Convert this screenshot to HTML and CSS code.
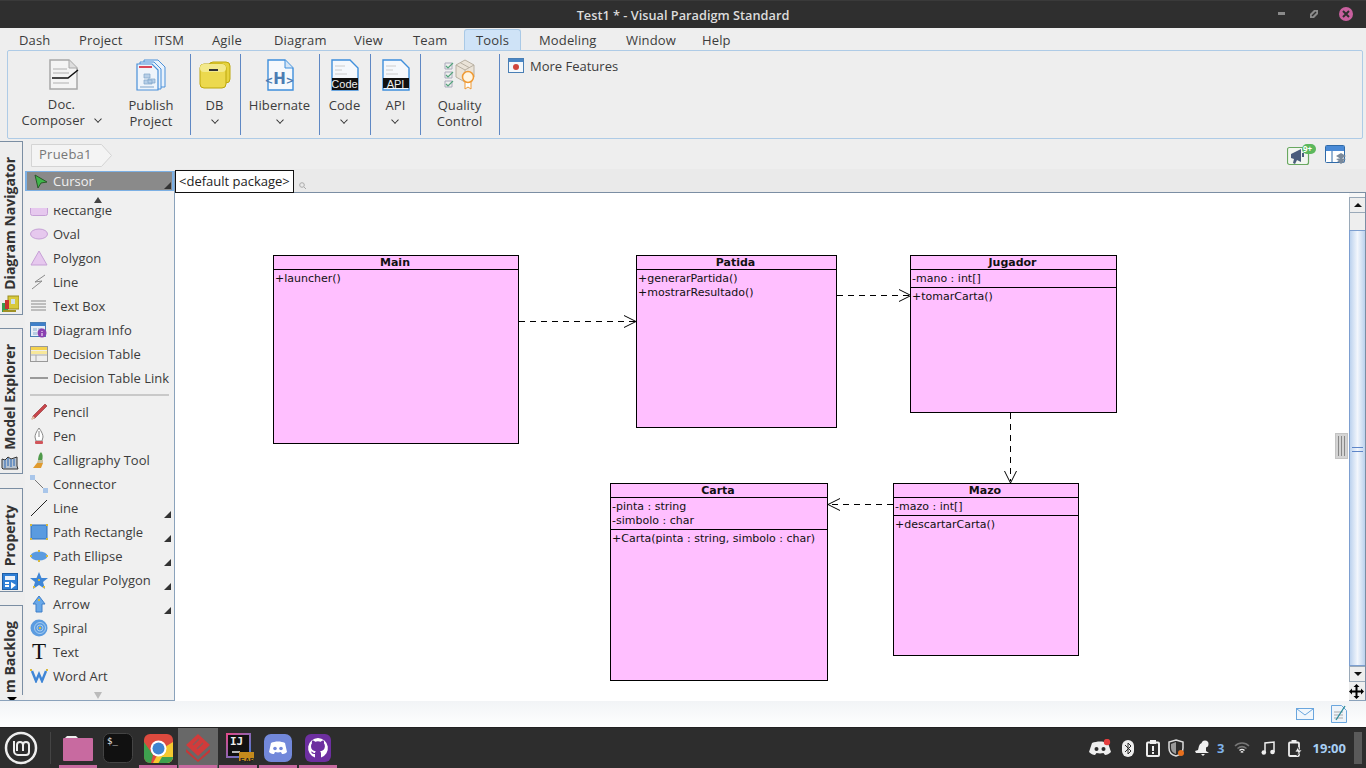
FILE: index.html
```html
<!DOCTYPE html>
<html lang="en">
<head>
<meta charset="utf-8">
<title>Test1 * - Visual Paradigm Standard</title>
<link rel="stylesheet" href="styles.css">
</head>
<body>
<div class="app">
  <header class="titlebar">
    <span class="title">Test1 * - Visual Paradigm Standard</span>
    <div class="winbtns">
      <svg width="7" height="4" viewBox="0 0 7 4"><rect x="0" y="0" width="7" height="3" fill="#8a8a8a"/></svg>
      <svg width="8" height="8" viewBox="0 0 8 8"><path d="M0 4 4 0h4v4L4 8H0z" fill="#8a8a8a"/><path d="M2 6 6 2" stroke="#2f2f2f" stroke-width="1.500"/></svg>
      <svg width="14" height="14" viewBox="0 0 14 14"><circle cx="7" cy="7" r="7" fill="#c9609f"/><path d="M4 4l6 6M10 4l-6 6" stroke="#2f2f2f" stroke-width="2"/></svg>
    </div>
  </header>

  <nav class="tabs">
    <span>Dash</span><span>Project</span><span>ITSM</span><span>Agile</span><span>Diagram</span><span>View</span><span>Team</span><span class="tab-on">Tools</span><span>Modeling</span><span>Window</span><span>Help</span>
  </nav>

  <section class="ribbon">
    <div class="rgroup g1">
      <div class="rbtn b-doc">
        <svg width="30" height="32" viewBox="0 0 30 32"><path d="M1 1h19l8 8v21H1z" fill="#f4f4f4" stroke="#a8a8a8" stroke-width="1.500"/><path d="M20 1v8h8" fill="#ddd" stroke="#a8a8a8"/><path d="M4 10h14M4 14h16M4 24h16" stroke="#b0b0b0"/><path d="M3 19h16l10-8" fill="none" stroke="#111" stroke-width="1.500"/></svg>
        <span class="rlabel">Doc.<br>Composer <i class="chev chev-gap"></i></span>
      </div>
      <div class="rbtn b-pub">
        <svg width="30" height="32" viewBox="0 0 30 32"><path d="M8 1h14l7 7v20H8z" fill="#e8f1fb" stroke="#4a90d9"/><path d="M4 3h14l7 7v20H4z" fill="#e8f1fb" stroke="#4a90d9"/><path d="M1 5h15l6 6v20H1z" fill="#eef4fb" stroke="#4a90d9" stroke-width="1.200"/><path d="M3 8h13" stroke="#d9475a" stroke-width="2"/><path d="M8 15h6v4H8zM12 20h7v4h-7zM8 21h8v4H8z" fill="#b7cfe8" stroke="#7fa3c9" stroke-width=".7"/><path d="M4 28h14" stroke="#7fa3c9"/></svg>
        <span class="rlabel">Publish<br>Project</span>
      </div>
    </div>
    <div class="rgroup g2">
      <div class="rbtn b-db">
        <svg width="32" height="28" viewBox="0 0 32 28"><rect x="10" y="1" width="21" height="21" rx="4" fill="#e6d33e" stroke="#bda70c"/><rect x="1" y="3" width="26" height="24" rx="4" fill="#ecd94e" stroke="#bda70c"/><rect x="1" y="3" width="26" height="8" rx="4" fill="#f3e98b"/><path d="M10 9h9" stroke="#333" stroke-width="2"/></svg>
        <span class="rlabel">DB<br><i class="chev"></i></span>
      </div>
    </div>
    <div class="rgroup g3">
      <div class="rbtn b-hib">
        <svg width="30" height="32" viewBox="0 0 30 32"><path d="M3 1h17l8 8v22H3z" fill="#f5f8fc" stroke="#3f8fdc" stroke-width="1.400"/><path d="M20 1v8h8" fill="#d5e5f5" stroke="#3f8fdc"/></svg>
        <span class="badge-h"><small>&lt;</small>H<small>&gt;</small></span>
        <span class="rlabel">Hibernate<br><i class="chev"></i></span>
      </div>
    </div>
    <div class="rgroup g4">
      <div class="rbtn b-code">
        <svg width="28" height="32" viewBox="0 0 28 32"><path d="M1 1h18l8 8v22H1z" fill="#f5f8fc" stroke="#3f8fdc" stroke-width="1.400"/><path d="M4 7h10M4 11h7M4 15h12" stroke="#ccc"/><rect x="1" y="19" width="26" height="12" fill="#111"/></svg>
        <span class="badge-code">Code</span>
        <span class="rlabel">Code<br><i class="chev"></i></span>
      </div>
    </div>
    <div class="rgroup g5">
      <div class="rbtn b-api">
        <svg width="28" height="32" viewBox="0 0 28 32"><path d="M1 1h18l8 8v22H1z" fill="#f5f8fc" stroke="#3f8fdc" stroke-width="1.400"/><path d="M4 7h10M4 11h7M4 15h12" stroke="#ccc"/><rect x="1" y="19" width="26" height="10" fill="#111"/></svg>
        <span class="badge-code">API</span>
        <span class="rlabel">API<br><i class="chev"></i></span>
      </div>
    </div>
    <div class="rgroup g6">
      <div class="rbtn b-qc">
        <svg width="32" height="32" viewBox="0 0 32 32"><path d="M12 6l9-5 9 5v12l-9 5-9-5z" fill="#eae3d8" stroke="#b8b0a2"/><path d="M12 6l9 5 9-5M21 11v12M16 3.500l9 5" fill="none" stroke="#b8b0a2"/><path d="M1 4h7v6H1zM1 13h7v6H1zM1 22h7v6H1z" fill="#eee" stroke="#aab"/><path d="M2 7l2 2 5-5M2 16l2 2 5-5M2 25l2 2 5-5" fill="none" stroke="#54a37c" stroke-width="1.200"/><path d="M21 22v8l3-2 3 2v-8" fill="#fff" stroke="#ef9a34"/><circle cx="24" cy="18" r="5.500" fill="#fff5e2" stroke="#ef9a34" stroke-width="1.500"/></svg>
        <span class="rlabel">Quality<br>Control</span>
      </div>
    </div>
    <div class="more">
      <svg width="16" height="15" viewBox="0 0 16 15"><rect x=".5" y=".5" width="15" height="14" fill="#f4f8fc" stroke="#4a7fb5"/><rect x="1" y="1" width="14" height="3" fill="#4a86c5"/><circle cx="8" cy="9" r="3" fill="#d0453c"/></svg>
      <span>More Features</span>
    </div>
  </section>

  <div class="crumbbar">
    <div class="crumb">
      <svg class="crumb-bg" width="82" height="23" viewBox="0 0 82 23"><path d="M.5.5h70l10 11-10 11H.5z" fill="#f4f4f4" stroke="#d4d4d4"/></svg>
      <span>Prueba1</span>
    </div>
    <div class="crumb-tools">
      <div class="megaphone">
        <svg width="30" height="22" viewBox="0 0 30 22"><rect x=".5" y="3.500" width="21" height="17" rx="2" fill="#f2f6f0" stroke="#69a860" stroke-width="1.200"/><path d="M4 10l10-5v13l-4-2-2 4-2-1 1-4-3-1z" fill="#4a5d7c"/><path d="M15 9h2v4h-2z" fill="#4a5d7c"/><rect x="15" y="0" width="14" height="10" rx="5" fill="#5cb85c"/></svg>
        <span class="nine">9+</span>
      </div>
      <svg width="21" height="19" viewBox="0 0 21 19"><rect x=".5" y=".5" width="19" height="17" rx="1" fill="#fff" stroke="#2f6aa8"/><rect x="1" y="1" width="18" height="5" fill="#4a8ad6"/><path d="M7 6v12" stroke="#2f6aa8"/><path d="M11 11l5-3 5 3-5 3zM11 14l5-1 5 1-5 3zM12 16l4-1 4 1-4 3z" fill="#7a8a9c"/></svg>
    </div>
  </div>

  <main class="work">
    <aside class="rail">
      <div class="vtab vt-nav"><span>Diagram Navigator</span>
        <svg width="18" height="18" viewBox="0 0 18 18"><rect x="7" y="1" width="11" height="13" fill="#d8c93c" stroke="#9a8d1e"/><rect x="10" y="4" width="4" height="5" fill="#cfe0ef"/><rect x="1" y="8" width="6" height="9" fill="#3a9c4e"/><rect x="4" y="5" width="4" height="9" fill="#c8342e"/><path d="M2 15h13v2H2z" fill="#a09124"/></svg>
      </div>
      <div class="vtab vt-model"><span>Model Explorer</span>
        <svg width="18" height="16" viewBox="0 0 18 16"><path d="M1 12V3l3 1 3-3 3 2 6-2v9l1 3H2z" fill="#b9c4d0" stroke="#333"/><path d="M4 4v8M7 2v8M10 3v8M13 3v7" stroke="#3f74b8" stroke-width="1.200"/></svg>
      </div>
      <div class="vtab vt-prop"><span>Property</span>
        <svg width="16" height="17" viewBox="0 0 16 17"><rect x=".5" y=".5" width="15" height="16" fill="#2f7fd6" stroke="#1d5fa8"/><rect x="3" y="3" width="10" height="4" fill="#eaf2fb"/><path d="M3 10h4M3 13h4" stroke="#fff" stroke-width="2"/><path d="M9 9l5 3-5 4z" fill="#fff"/></svg>
      </div>
      <div class="vtab vt-backlog"><span>m Backlog</span></div>
      <i class="rail-more"></i>
    </aside>

    <aside class="palette">
      <div class="cursor">
        <svg width="14" height="15" viewBox="0 0 14 15"><path d="M1 1l12 7-6 1-3 5z" fill="#3fb54a" stroke="#2a5a2a"/></svg>
        <span>Cursor</span><i class="corner"></i>
      </div>
      <div class="pal-up"><i></i></div>
      <div class="pal-list">
        <div class="item first"><svg width="18" height="12" viewBox="0 0 18 12"><rect x=".5" y=".5" width="17" height="11" rx="2" fill="#e6c8ee" stroke="#c6a0d6"/></svg><span>Rectangle</span></div>
        <div class="item"><svg width="18" height="12" viewBox="0 0 18 12"><ellipse cx="9" cy="6" rx="8.500" ry="5" fill="#e6c8ee" stroke="#c6a0d6"/></svg><span>Oval</span></div>
        <div class="item"><svg width="18" height="16" viewBox="0 0 18 16"><path d="M9 1l8 14H1z" fill="#e6c8ee" stroke="#c6a0d6"/></svg><span>Polygon</span></div>
        <div class="item"><svg width="18" height="16" viewBox="0 0 18 16"><path d="M15 1 5 8l7-1L2 15" fill="none" stroke="#8a8a8a"/></svg><span>Line</span></div>
        <div class="item"><svg width="18" height="12" viewBox="0 0 18 12"><path d="M1 1h15M1 4h15M1 7h15M1 10h15" stroke="#8a8a8a"/></svg><span>Text Box</span></div>
        <div class="item"><svg width="18" height="16" viewBox="0 0 18 16"><rect x=".5" y=".5" width="15" height="14" fill="#e8eef6" stroke="#4a7fb5"/><rect x="1" y="1" width="14" height="3" fill="#3f7fc9"/><path d="M3 6h4v3H3zM8 6h4v3H8zM3 10h4v3H3z" fill="#b8cde2"/><circle cx="12" cy="11" r="4.500" fill="#8a3fb0"/><path d="M12 9v1M12 11v3" stroke="#fff"/></svg><span>Diagram Info</span></div>
        <div class="item"><svg width="18" height="16" viewBox="0 0 18 16"><rect x=".5" y=".5" width="17" height="15" fill="#eee" stroke="#999"/><rect x="1" y="1" width="16" height="3" fill="#f4d24e"/><rect x="1" y="5" width="16" height="3" fill="#f8e89a"/><path d="M1 9h16M6 9v6" stroke="#aaa"/></svg><span>Decision Table</span></div>
        <div class="item"><svg width="18" height="12" viewBox="0 0 18 12"><path d="M0 6h18" stroke="#444"/></svg><span>Decision Table Link</span></div>
        <div class="pal-sep"></div>
        <div class="item"><svg width="18" height="18" viewBox="0 0 18 18"><path d="M15 1l2 2L5 15l-3 1 1-3z" fill="#c9444a" stroke="#8a2d30" stroke-width=".6"/><path d="M1 17l2-4 2 2z" fill="#e8c8a8"/></svg><span>Pencil</span></div>
        <div class="item"><svg width="18" height="18" viewBox="0 0 18 18"><path d="M9 1c3 4 4 7 4 9l-1 4H6l-1-4c0-2 1-5 4-9z" fill="#fff" stroke="#888"/><path d="M9 4v6" stroke="#888"/><rect x="5" y="14" width="8" height="3" rx="1" fill="#d0555a"/></svg><span>Pen</span></div>
        <div class="item"><svg width="18" height="18" viewBox="0 0 18 18"><path d="M11 1c2 2 2 5 1 9H8c0-4 1-7 3-9z" fill="#4f9a4a"/><path d="M8 9h5l0 3H7z" fill="#c8bfa0"/><path d="M7 12h6l-2 5H3z" fill="#e09a2e"/></svg><span>Calligraphy Tool</span></div>
        <div class="item"><svg width="18" height="18" viewBox="0 0 18 18"><path d="M3 3l12 12" stroke="#777"/><rect x="0" y="0" width="5" height="5" fill="#a9c6ea"/><rect x="13" y="13" width="5" height="5" fill="#a9c6ea"/></svg><span>Connector</span></div>
        <div class="item arrowed"><svg width="18" height="18" viewBox="0 0 18 18"><path d="M1 17 17 1" stroke="#222"/></svg><span>Line</span></div>
        <div class="item arrowed"><svg width="18" height="16" viewBox="0 0 18 16"><rect x="1" y="1" width="16" height="14" fill="#5a9be0" stroke="#2f6fb8"/><rect x="0" y="0" width="2" height="2" fill="#d8b93c"/><rect x="16" y="0" width="2" height="2" fill="#d8b93c"/><rect x="0" y="14" width="2" height="2" fill="#d8b93c"/><rect x="16" y="14" width="2" height="2" fill="#d8b93c"/></svg><span>Path Rectangle</span></div>
        <div class="item arrowed"><svg width="18" height="12" viewBox="0 0 18 12"><ellipse cx="9" cy="6" rx="8.500" ry="4.500" fill="#5a9be0"/><rect x="8" y="0" width="2" height="2" fill="#d8b93c"/><rect x="8" y="10" width="2" height="2" fill="#d8b93c"/><rect x="0" y="5" width="2" height="2" fill="#d8b93c"/><rect x="16" y="5" width="2" height="2" fill="#d8b93c"/></svg><span>Path Ellipse</span></div>
        <div class="item arrowed"><svg width="18" height="17" viewBox="0 0 18 17"><path d="M9 0l2.500 6H18l-5 4 2 7-6-4-6 4 2-7-5-4h6.500z" fill="#3f86d6"/><rect x="8" y="7" width="2" height="2" fill="#d8b93c"/><rect x="3" y="14" width="2" height="2" fill="#d8b93c"/><rect x="13" y="14" width="2" height="2" fill="#d8b93c"/></svg><span>Regular Polygon</span></div>
        <div class="item arrowed"><svg width="18" height="18" viewBox="0 0 18 18"><path d="M9 1l6 8h-3v8H6V9H3z" fill="#68a8e8" stroke="#3f7fc9"/><rect x="8" y="4" width="2" height="2" fill="#d8b93c"/></svg><span>Arrow</span></div>
        <div class="item"><svg width="18" height="18" viewBox="0 0 18 18"><circle cx="9" cy="9" r="8.500" fill="#5a9be0"/><circle cx="10" cy="9" r="5.500" fill="none" stroke="#a8cdf0"/><circle cx="10" cy="9" r="3" fill="none" stroke="#a8cdf0"/><rect x="9" y="8" width="2" height="2" fill="#d8b93c"/></svg><span>Spiral</span></div>
        <div class="item"><span class="t-icon">T</span><span>Text</span></div>
        <div class="item"><svg width="18" height="14" viewBox="0 0 18 14"><path d="M2 2l4 10 3-7 3 7 4-10" fill="none" stroke="#3f86d6" stroke-width="2.400"/><rect x="0" y="0" width="2" height="2" fill="#d8b93c"/><rect x="16" y="0" width="2" height="2" fill="#d8b93c"/></svg><span>Word Art</span></div>
      </div>
      <div class="pal-down"><i></i></div>
    </aside>

    <div class="editor">
      <div class="pkgbar">
        <span class="pkg">&lt;default package&gt;</span>
        <svg width="8" height="8" viewBox="0 0 8 8"><circle cx="3" cy="3" r="2.300" fill="none" stroke="#aaa"/><path d="M5 5l2 2" stroke="#aaa"/></svg>
      </div>
      <div class="canvas-row">
        <div class="canvas">
          <svg class="links" width="1175" height="508" viewBox="0 0 1175 508">
            <g fill="none" stroke="#000">
              <path d="M345 128.500h116" stroke-dasharray="6 5"/>
              <path d="M450 122.500l12 6-12 6"/>
              <path d="M663 102.500h73" stroke-dasharray="6 5"/>
              <path d="M725 96.500l12 6-12 6"/>
              <path d="M836.500 220v68" stroke-dasharray="6 5"/>
              <path d="M830.500 278l6 12 6-12"/>
              <path d="M719 311.500h-63" stroke-dasharray="6 5"/>
              <path d="M666 305.500l-12 6 12 6"/>
            </g>
          </svg>
          <article class="cls c-main">
            <h3>Main</h3>
            <div class="ops"><p>+launcher()</p></div>
          </article>
          <article class="cls c-patida">
            <h3>Patida</h3>
            <div class="ops"><p>+generarPartida()</p><p>+mostrarResultado()</p></div>
          </article>
          <article class="cls c-jugador">
            <h3>Jugador</h3>
            <div class="attrs"><p>-mano : int[]</p></div>
            <div class="ops"><p>+tomarCarta()</p></div>
          </article>
          <article class="cls c-carta">
            <h3>Carta</h3>
            <div class="attrs"><p>-pinta : string</p><p>-simbolo : char</p></div>
            <div class="ops"><p>+Carta(pinta : string, simbolo : char)</p></div>
          </article>
          <article class="cls c-mazo">
            <h3>Mazo</h3>
            <div class="attrs"><p>-mazo : int[]</p></div>
            <div class="ops"><p>+descartarCarta()</p></div>
          </article>
          <div class="grip"><i></i><i></i><i></i></div>
        </div>
        <div class="vscroll">
          <div class="sb-top"></div>
          <div class="sb-btn"><i class="up"></i></div>
          <div class="sb-gap"></div>
          <div class="sb-thumb"><b></b></div>
          <div class="sb-btn"><i class="down"></i></div>
          <div class="sb-move"><svg width="15" height="15" viewBox="0 0 15 15"><path d="M7.500 0l3 3H8.500v3.500H12V4.500l3 3-3 3V8.500H8.500V12h2l-3 3-3-3h2V8.500H3v2l-3-3 3-3v2h3.500V3h-2z" fill="#000"/></svg></div>
        </div>
      </div>
    </div>
  </main>

  <footer class="statusbar">
    <svg width="18" height="12" viewBox="0 0 18 12"><rect x=".5" y=".5" width="17" height="11" fill="#f2f7fc" stroke="#6aa6de"/><path d="M1 1l8 6 8-6" fill="none" stroke="#6aa6de"/></svg>
    <svg width="16" height="18" viewBox="0 0 16 18"><path d="M.5.500h10l5 5v12H.5z" fill="#eef4fa" stroke="#6aa6de"/><path d="M3 7h9M3 10h9M3 13h9" stroke="#aaa"/><path d="M5 15 14 1" stroke="#2a8a9a" stroke-width="1.300"/></svg>
  </footer>

  <div class="taskbar">
    <div class="launch">
      <svg class="mint" width="34" height="34" viewBox="0 0 34 34"><circle cx="17" cy="17" r="15" fill="none" stroke="#eee" stroke-width="2.500"/><path d="M10 10v10a4 4 0 0 0 4 4h8a3 3 0 0 0 3-3v-7a3 3 0 0 0-6 0v6M19 14a3 3 0 0 0-6 0v6" fill="none" stroke="#eee" stroke-width="2"/></svg>
      <i class="tb-sep"></i>
      <div class="app-ico on-line">
        <svg width="30" height="26" viewBox="0 0 30 26"><path d="M1 4l3-3h9l3 3z" fill="#eee"/><rect x="0" y="3" width="30" height="23" rx="1" fill="#c86aa0"/></svg>
      </div>
      <div class="app-ico">
        <svg width="30" height="30" viewBox="0 0 30 30"><rect x=".5" y=".5" width="29" height="29" rx="6" fill="#111" stroke="#444"/></svg>
        <span class="prompt">$_</span>
      </div>
      <div class="app-ico on-line">
        <svg width="29" height="29" viewBox="0 0 29 29"><rect width="29" height="29" rx="6" fill="#dd4a3e"/><path d="M0 23V8l9 13-2 8H6a6 6 0 0 1-6-6z" fill="#3ea14e"/><path d="M29 8v15a6 6 0 0 1-6 6H9l7-13z" fill="#f5c92f"/><path d="M14.500 29h8.500a6 6 0 0 0 6-6V23H18z" fill="#3ea14e"/><circle cx="14.500" cy="14.500" r="8" fill="#fff"/><circle cx="14.500" cy="14.500" r="6" fill="#3f84cf"/></svg>
      </div>
      <div class="app-ico on-line active">
        <svg width="28" height="28" viewBox="0 0 28 28"><path d="M14 0 26 11 14 22 2 11z" fill="#d23b3b"/><path d="M9 11l6-6M13 15l6-6" stroke="#8a5a5a" stroke-width="1.500"/><path d="M2 15l12 11 12-11v3L14 28 2 18z" fill="#c73636"/></svg>
      </div>
      <div class="app-ico on-line ide">
        <svg width="30" height="30" viewBox="0 0 30 30"><defs><linearGradient id="ijg" x1="0" y1="0" x2="1" y2="1"><stop offset="0" stop-color="#e04a8a"/><stop offset="1" stop-color="#3f7fd6"/></linearGradient></defs><rect x="1" y="1" width="23" height="23" fill="#111" stroke="url(#ijg)" stroke-width="2"/><path d="M6 19h8" fill="none" stroke="#eee" stroke-width="1.500"/><rect x="13" y="19" width="15" height="9" fill="#c48a1c"/></svg>
        <span class="ij">IJ</span>
        <span class="eap">EAP</span>
      </div>
      <div class="app-ico on-line">
        <svg width="28" height="28" viewBox="0 0 28 28"><rect width="28" height="28" rx="7" fill="#7288da"/><path d="M7 9c4-2 10-2 14 0l2 9c-2 2-4 2-5 2l-1-2c-2 .5-4 .5-6 0l-1 2c-1 0-3 0-5-2z" fill="#fff"/><circle cx="11" cy="14.500" r="1.800" fill="#7288da"/><circle cx="17" cy="14.500" r="1.800" fill="#7288da"/></svg>
      </div>
      <div class="app-ico on-line">
        <svg width="26" height="28" viewBox="0 0 26 28"><rect width="26" height="28" rx="6" fill="#6d2fa0"/><path d="M13 4a10 10 0 0 0-3 19.500v-3.500c-3 .6-3.500-1.500-4-2.500 2 0 2 2 4 1.500 0-1 .5-1.500.8-1.800-3-.5-4.800-2-4.800-5 0-1.200.4-2.200 1-3-.2-.6-.2-1.800.2-2.700 1.200 0 2.200.6 3 1.200a9 9 0 0 1 5.500 0c.8-.6 1.800-1.200 3-1.200.4.900.4 2.100.2 2.700.6.800 1 1.800 1 3 0 3-1.800 4.500-4.800 5 .5.500.9 1.200.9 2.500v3.800A10 10 0 0 0 13 4z" fill="#fff"/></svg>
      </div>
    </div>
    <div class="tray">
      <div class="t-discord">
        <svg width="24" height="18" viewBox="0 0 24 18"><path d="M4 4c5-2 11-2 16 0l3 9c-2 2-4 3-6 3l-1.500-2c-2.300.6-4.700.6-7 0L7 16c-2 0-4-1-6-3z" fill="#eee"/><circle cx="8.500" cy="10" r="2" fill="#2d2d2d"/><circle cx="15.500" cy="10" r="2" fill="#2d2d2d"/><circle cx="19" cy="3" r="3.200" fill="#e33d3d"/></svg>
      </div>
      <svg class="t-bt" width="12" height="17" viewBox="0 0 12 17"><rect width="12" height="17" rx="6" fill="#eee"/><path d="M3 5l6 6-3 3V3l3 3-6 6" fill="none" stroke="#2d2d2d"/></svg>
      <svg class="t-clip" width="14" height="17" viewBox="0 0 14 17"><rect x="1" y="2.500" width="12" height="13.500" rx="1" fill="none" stroke="#eee" stroke-width="2"/><rect x="4" y="0" width="6" height="4" fill="#eee"/><path d="M7 6v5M7 12v2" stroke="#eee" stroke-width="2"/></svg>
      <svg class="t-shield" width="17" height="18" viewBox="0 0 17 18"><path d="M8 1l7 2v6c0 4-3 7-7 8-4-1-7-4-7-8V3z" fill="none" stroke="#ddd" stroke-width="1.500"/><path d="M8 3v12c-3-1-5-3-5-6V5z" fill="#999"/><circle cx="13" cy="14" r="3" fill="#e8701e"/></svg>
      <svg class="t-bell" width="15" height="16" viewBox="0 0 15 16"><path d="M7 3a4 4 0 0 1 4 4v4l3 2H1l-1-2 3-1 1-4a4 4 0 0 1 3-3z" fill="#eee"/><path d="M6 14h4l-2 2z" fill="#eee"/><circle cx="10" cy="4" r="3.500" fill="#eee"/></svg>
      <span class="t-num">3</span>
      <svg class="t-wifi" width="16" height="12" viewBox="0 0 16 12"><path d="M1 4c4-4 10-4 14 0M3.500 6.500c3-2.500 6-2.500 9 0" fill="none" stroke="#777" stroke-width="1.500"/><path d="M5.500 8.500c1.500-1.500 3.500-1.500 5 0M7 10.500c.5-1 1.500-1 2 0" fill="none" stroke="#eee" stroke-width="1.500"/></svg>
      <svg class="t-music" width="14" height="14" viewBox="0 0 14 14"><path d="M4 11V2l9-1v10" fill="none" stroke="#eee" stroke-width="1.500"/><circle cx="2.800" cy="11.500" r="2.300" fill="#eee"/><circle cx="11.500" cy="11" r="2.300" fill="#eee"/></svg>
      <svg class="t-bat" width="14" height="17" viewBox="0 0 14 17"><rect x="1" y="2.500" width="10" height="13.500" rx="1" fill="none" stroke="#eee" stroke-width="1.800"/><rect x="3.500" y="0" width="5" height="3" fill="#eee"/><path d="M10 7 7 12h3l-1 4 5-6h-3z" fill="#eee" stroke="#2d2d2d" stroke-width=".7"/></svg>
      <span class="t-clock">19:00</span>
      <i class="t-show"></i>
    </div>
  </div>
</div>
</body>
</html>
```
FILE: styles.css
```css
* { box-sizing: border-box; }
html, body { margin: 0; padding: 0; }
body { width: 1366px; height: 768px; overflow: hidden; font-family: "Open Sans", "Noto Sans", sans-serif; font-size: 13px; color: #3c3c3c; background: #eeeeee; }
p, h3 { margin: 0; }
i { display: block; }

.app { display: flex; flex-direction: column; width: 1366px; height: 768px; }

/* title bar */
.titlebar { position: relative; flex: 0 0 28px; background: #2f2f2f; border-top: 1px solid #3a3a3a; display: flex; align-items: center; justify-content: center; }
.title { color: #dcdcdc; font-size: 12.750px; font-weight: 600; }
.winbtns { position: absolute; right: 13px; top: 6px; height: 14px; display: flex; align-items: center; }
.winbtns svg:nth-child(1) { margin-right: 25px; }
.winbtns svg:nth-child(2) { margin-right: 21px; }

/* tabs */
.tabs { flex: 0 0 22px; display: flex; align-items: flex-end; padding-left: 19px; background: #eeeeee; }
.tabs span { line-height: 20px; height: 20px; font-size: 13px; letter-spacing: .15px; }
.tabs span:nth-child(1) { flex: 0 0 60px; }
.tabs span:nth-child(2) { flex: 0 0 75px; }
.tabs span:nth-child(3) { flex: 0 0 58px; }
.tabs span:nth-child(4) { flex: 0 0 62px; }
.tabs span:nth-child(5) { flex: 0 0 80px; }
.tabs span:nth-child(6) { flex: 0 0 59px; }
.tabs span:nth-child(7) { flex: 0 0 51px; }
.tabs span:nth-child(9) { flex: 0 0 87px; }
.tabs span:nth-child(10) { flex: 0 0 76px; }
.tabs .tab-on { flex: 0 0 57px; height: 21px; margin-right: 18px; padding-left: 11px; background: #cfe3f7; border: 1px solid #a9c9e6; border-bottom: 0; border-radius: 3px 3px 0 0; }

/* ribbon */
.ribbon { flex: 0 0 89px; margin: 0 3px 0 7px; border: 1px solid #aecbe6; border-radius: 2px; display: flex; padding-top: 3px; background: #eeeeee; }
.rgroup { height: 81px; border-right: 1px solid #5f88c4; display: flex; }
.g1 { width: 183px; padding-left: 6px; }
.g2 { width: 50px; }
.g3 { width: 79px; }
.g4 { width: 51px; }
.g5 { width: 50px; }
.g6 { width: 79px; }
.rbtn { position: relative; flex: 0 0 auto; display: flex; flex-direction: column; align-items: center; padding-top: 5px; text-align: center; }
.rbtn svg { flex: 0 0 auto; }
.rlabel { display: block; line-height: 16px; font-size: 13px; margin-top: 6px; white-space: nowrap; letter-spacing: .1px; }
.b-doc { width: 95px; }
.b-doc svg { margin-left: 5px; }
.b-doc .rlabel { margin-top: 5px; }
.b-pub { width: 80px; margin-left: 2px; }
.b-db { width: 47px; padding-top: 7px; }
.b-db .rlabel { margin-top: 8px; }
.b-hib { width: 77px; }
.b-code, .b-api { width: 49px; }
.b-qc { width: 77px; }
.chev { display: inline-block; width: 6px; height: 6px; margin: 0 0 3px 0; border-right: 1.500px solid #333; border-bottom: 1.500px solid #333; transform: rotate(45deg) scale(.9); }
.chev-gap { margin-left: 7px; }
.badge-code { position: absolute; top: 25px; left: 0; right: 0; color: #eee; font-family: "Liberation Sans", sans-serif; font-size: 11px; line-height: 11px; }
.badge-h { position: absolute; top: 17px; left: 0; right: 0; color: #4a7cb3; font-family: "DejaVu Sans", sans-serif; font-size: 15px; font-weight: 700; line-height: 16px; }
.badge-h small { font-size: 10px; }
.more { display: flex; align-items: flex-start; gap: 6px; padding: 4px 0 0 8px; line-height: 16px; }

/* breadcrumb */
.crumbbar { flex: 0 0 32px; display: flex; align-items: flex-start; justify-content: space-between; padding: 5px 20px 0 31px; }
.crumb { position: relative; width: 82px; height: 23px; padding-left: 8px; line-height: 21px; color: #777; letter-spacing: .25px; }
.crumb-bg { position: absolute; left: 0; top: 0; }
.crumb span { position: relative; }
.crumb-tools { display: flex; gap: 8px; align-items: flex-start; padding-top: 1px; }
.megaphone { position: relative; width: 30px; height: 22px; margin-top: -1px; }
.nine { position: absolute; left: 16px; top: -1px; font-size: 8px; line-height: 11px; color: #fff; font-weight: 700; }

/* work area */
.work { flex: 1 1 auto; min-height: 0; display: flex; }
.rail { position: relative; flex: 0 0 25px; overflow: hidden; margin-top: -30px; }
.vtab { position: absolute; left: 0; width: 23px; background: #eeeeee; border: 1px solid #7b8ea3; border-left: 0; display: flex; flex-direction: column; align-items: center; justify-content: flex-end; gap: 5px; padding: 0 3px 1px 0; }
.vtab span { writing-mode: vertical-rl; transform: rotate(180deg); font-weight: 700; font-size: 14px; line-height: 20px; color: #333; white-space: nowrap; }
.vt-nav { top: 0; height: 174px; }
.vt-model { top: 187px; height: 146px; gap: 6px; }
.vt-prop { top: 347px; height: 104px; gap: 7px; }
.vt-backlog { top: 464px; height: 90px; border-bottom: 0; padding-bottom: 2px; }
.rail-more { position: absolute; left: 7px; top: 556px; width: 0; height: 0; border: 5px solid transparent; border-top: 5px solid #000; border-bottom: 0; }

.palette { flex: 0 0 150px; display: flex; flex-direction: column; height: 530px; border-right: 1px solid #8aa2bb; background: #f0f0f0; }
.cursor { position: relative; flex: 0 0 20px; display: flex; align-items: center; gap: 5px; padding-left: 7px; background: #8a8a8a; border: 1px solid #7cb0e4; color: #f0f0f0; border-width: 1px 2px; }
.corner, .item.arrowed::after { position: absolute; right: 1px; bottom: 1px; width: 0; height: 0; border-left: 7px solid transparent; border-bottom: 7px solid #333; }
.pal-up { flex: 0 0 17px; padding: 6px 0 0 69px; }
.pal-up i { width: 0; height: 0; border: 4px solid transparent; border-bottom: 6px solid #444; border-top: 0; }
.pal-list { flex: 0 0 480px; overflow: hidden; }
.item { position: relative; height: 24px; display: flex; align-items: center; padding-left: 5px; white-space: nowrap; }
.item svg { flex: 0 0 18px; }
.item span:last-child { position: absolute; left: 28px; }
.item.arrowed::after { content: ""; right: 3px; bottom: 2px; }
.first { margin-top: -10px; }
.pal-sep { height: 2px; margin: 4px 5px; background: #c9c9c9; }
.t-icon { font-family: "Liberation Serif", serif; font-size: 23px; font-weight: 400; color: #111; width: 18px; text-align: center; line-height: 24px; }
.pal-down { position: relative; height: 6px; }
.pal-down i { position: absolute; left: 69px; top: 4px; width: 0; height: 0; border: 4px solid transparent; border-top: 7px solid #bbb; border-bottom: 0; }

.editor { flex: 1 1 auto; display: flex; flex-direction: column; min-width: 0; margin-top: -2px; }
.pkgbar { flex: 0 0 24px; display: flex; align-items: flex-end; background: #eaeaea; padding-left: 0; border-bottom: 1px solid #7b8ea3; }
.pkg { height: 23px; width: 119px; border: 1px solid #111; background: #fff; padding-left: 3px; line-height: 20px; font-size: 13px; color: #222; white-space: nowrap; margin-bottom: -1px; }
.pkgbar svg { margin: 0 0 2px 5px; }
.canvas-row { flex: 0 0 508px; display: flex; }
.canvas { position: relative; flex: 0 0 1174px; background: #fff; overflow: hidden; }
.links { position: absolute; left: -1px; top: 0; }

/* UML classes */
.cls { position: absolute; display: flex; flex-direction: column; background: #ffbfff; border: 1px solid #000; font-family: "DejaVu Sans", sans-serif; font-size: 11px; line-height: 14px; color: #111; }
.cls h3 { font-size: 11px; line-height: 13px; height: 14px; text-align: center; font-weight: 700; border-bottom: 1px solid #000; flex: 0 0 14px; padding-right: 2px; }
.cls p { padding-left: 1px; white-space: nowrap; }
.attrs { border-bottom: 1px solid #000; padding-bottom: 1px; padding-top: 2px; }
.ops { padding-top: 2px; }
.c-main { left: 98px; top: 62px; width: 246px; height: 189px; }
.c-patida { left: 461px; top: 62px; width: 201px; height: 173px; }
.c-jugador { left: 735px; top: 62px; width: 207px; height: 158px; }
.c-carta { left: 435px; top: 290px; width: 218px; height: 198px; }
.c-mazo { left: 718px; top: 290px; width: 186px; height: 173px; }

.grip { position: absolute; right: 1px; top: 240px; width: 13px; height: 26px; display: flex; justify-content: center; gap: 2px; background: #d4d4d4; border: 1px solid #c4c4c4; padding: 2px 0; }
.grip i { width: 1px; background: #888; }

/* scrollbar */
.vscroll { flex: 0 0 15px; display: flex; flex-direction: column; background: #eeeeee; border-right: 1px solid #7b8ea3; }
.sb-top { flex: 0 0 4px; background: #f6f6f6; }
.sb-btn { flex: 0 0 16px; display: flex; align-items: center; justify-content: center; background: #eee; border: 1px solid #9aa9b8; border-right: 0; }
.sb-btn .up { width: 0; height: 0; border: 4px solid transparent; border-bottom: 4px solid #111; border-top: 0; }
.sb-btn .down { width: 0; height: 0; border: 4px solid transparent; border-top: 4px solid #111; border-bottom: 0; }
.sb-gap { flex: 0 0 17px; border-left: 1px solid #9aa9b8; }
.sb-thumb { flex: 1 1 auto; position: relative; background: linear-gradient(90deg, #bcd2ee, #f2f6fc 50%, #bcd2ee); border: 1px solid #7d9fd0; border-width: 1px 0 1px 1px; }
.sb-thumb b { position: absolute; left: 2px; right: 2px; top: 216px; height: 5px; border-top: 1px solid #5f86c9; border-bottom: 1px solid #5f86c9; }
.sb-move { flex: 0 0 19px; display: flex; align-items: center; justify-content: center; padding-right: 1px; background: #eee; }

/* status bar */
.statusbar { flex: 0 0 27px; display: flex; align-items: center; justify-content: flex-end; gap: 17px; padding-right: 19px; background: linear-gradient(#f2f4f6, #fff); border-top: 1px solid #8aa2bb; }

/* taskbar */
.taskbar { flex: 0 0 41px; display: flex; align-items: center; justify-content: space-between; background: #2d2d2d; border-top: 1px solid #222; }
.launch { display: flex; align-items: center; height: 100%; padding-left: 4px; }
.mint { flex: 0 0 34px; }
.tb-sep { width: 1px; height: 32px; margin: 0 7px 0 12px; background: #444; }
.app-ico { position: relative; width: 40px; height: 40px; display: flex; align-items: center; justify-content: center; }
.app-ico.on-line::after { content: ""; position: absolute; left: 1px; right: 1px; bottom: 0; height: 3px; background: #c86aa0; }
.app-ico.active { background: #686868; }
.ide svg { margin-left: 5px; }
.prompt { position: absolute; left: 9px; top: 8px; font-family: "DejaVu Sans Mono", monospace; font-size: 9px; line-height: 10px; color: #eee; }
.ij { position: absolute; left: 12px; top: 8px; font-family: "DejaVu Sans Mono", monospace; font-size: 11px; font-weight: 700; line-height: 12px; color: #eee; }
.eap { position: absolute; left: 22px; top: 29px; font-family: "Liberation Sans", sans-serif; font-size: 7px; line-height: 8px; color: #222; font-weight: 700; }
.tray { display: flex; align-items: center; height: 100%; padding-right: 4px; color: #eee; }
.t-discord { width: 24px; height: 18px; margin-right: 10px; }
.t-bt { margin-right: 12px; }
.t-clip { margin-right: 8px; }
.t-shield { margin-right: 10px; }
.t-bell { margin-right: 4px; }
.t-num { color: #7fb2e8; font-weight: 700; width: 11px; text-align: right; margin-right: 9px; }
.t-wifi { margin-right: 11px; }
.t-music { margin-right: 13px; }
.t-bat { margin-right: 11px; }
.t-clock { color: #a8cff5; font-weight: 700; font-size: 13px; margin-right: 8px; }
.t-show { width: 8px; height: 32px; background: #5a5a5a; }
```
